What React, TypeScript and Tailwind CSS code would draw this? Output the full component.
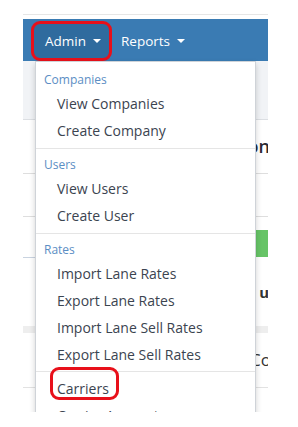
import React from "react";

const Caret = () => (
  <span className="ml-[7px] inline-block h-0 w-0 border-x-[4px] border-t-[4px] border-x-transparent border-t-white align-middle" />
);

function Header({ children }: { children: React.ReactNode }) {
  return (
    <div className="pt-[6px] pl-[8px] h-[26px] text-[12px] leading-[20px] text-[#5b8ec4]">{children}</div>
  );
}

function Item({ children }: { children: React.ReactNode }) {
  return <div className="h-[27px] pl-[21px] text-[14px] leading-[27px] text-[#3b4450] whitespace-nowrap">{children}</div>;
}

export default function App() {
  return (
    <div className="w-[298px] h-[427px] bg-white overflow-hidden" style={{ fontFamily: '"Open Sans", "Liberation Sans", sans-serif' }}>
      <div className="relative ml-[23px] w-[245px] h-[412px] overflow-hidden">
        {/* top strip */}
        <div className="h-[14px] bg-white" />
        <div className="h-[1px] bg-[#e6e6e6]" />
        <div className="h-[4px] bg-white" />
        {/* navbar */}
        <div className="h-[42px] bg-[#3a7bb3] flex items-end">
          <div className="ml-[8px] h-[40px] w-[81px] rounded-[9px] border-[3px] border-[#e8101a] bg-[#2f6b9e] flex items-center pl-[11px] text-[13.5px] text-white">
            Admin<Caret />
          </div>
          <div className="ml-[9px] h-[40px] flex items-center text-[13.5px] text-white">
            Reports<Caret />
          </div>
        </div>
        {/* page content behind */}
        <div className="h-[59px] bg-[#f1f3f6] border-b border-[#dcdfe3]" />
        <div className="h-[54px] bg-white border-b border-[#dedede] flex items-center justify-end">
          <span className="text-[18px] text-[#2b2b33] font-semibold -mr-[2px]">on</span>
        </div>
        <div className="h-[43px] bg-white border-b border-[#dedede]" />
        <div className="h-[13px] bg-white" />
        <div className="h-[27px] bg-white flex">
          <div className="flex-1" />
          <div className="w-[60px] bg-[#67c467]" />
        </div>
        <div className="h-[1px] bg-[#c9d3e0] w-[20px]" />
        <div className="h-[68px] bg-white flex items-center justify-end">
          <span className="text-[15px] font-bold text-[#333] -mr-[1px]">u</span>
        </div>
        <div className="h-[7px] bg-[#eeeeee]" />
        <div className="h-[55px] bg-white border-b border-[#e2e2e2] flex items-center justify-end">
          <span className="text-[17px] text-[#333] -mr-[3px]">Co</span>
        </div>
        <div className="flex-1 bg-white" />

        {/* dropdown */}
        <div className="absolute left-[12px] top-[61px] w-[221px] h-[400px] bg-white border border-[#cfd3d8] shadow-[0_3px_6px_rgba(0,0,0,0.18)] pt-[2px]">
          <Header>Companies</Header>
          <Item>View Companies</Item>
          <Item>Create Company</Item>
          <div className="mt-[4px] h-[1px] bg-[#e5e5e5]" />
          <Header>Users</Header>
          <Item>View Users</Item>
          <Item>Create User</Item>
          <div className="mt-[4px] h-[1px] bg-[#e5e5e5]" />
          <Header>Rates</Header>
          <Item>Import Lane Rates</Item>
          <Item>Export Lane Rates</Item>
          <Item>Import Lane Sell Rates</Item>
          <Item>Export Lane Sell Rates</Item>
          <div className="mt-[3px] h-[1px] bg-[#e5e5e5]" />
          <div className="mt-[3px] relative">
            <Item>Carriers</Item>
            <div className="absolute left-[14px] top-[-8px] w-[69px] h-[33px] rounded-[9px] border-[3px] border-[#e8101a]" />
          </div>
          <Item>Carrier Accounts</Item>
        </div>
      </div>
    </div>
  );
}
